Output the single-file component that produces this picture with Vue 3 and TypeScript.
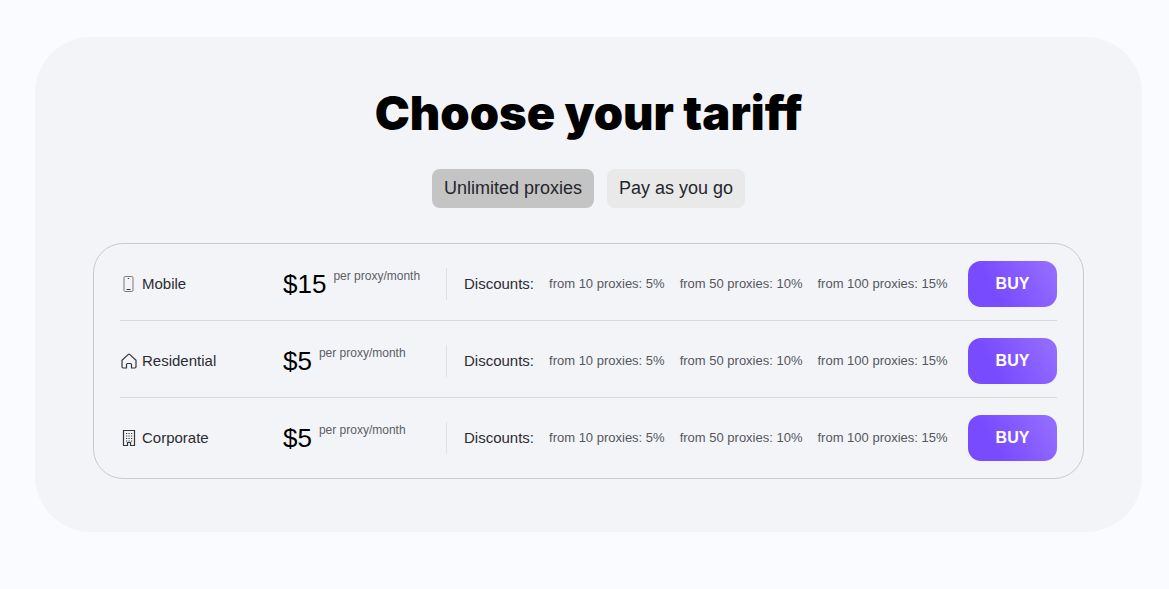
<script setup lang="ts">
import { ref } from 'vue'

type Kind = 'mobile' | 'residential' | 'corporate'
interface Plan { kind: Kind; name: string; price: string }

const modes: string[] = ['Unlimited proxies', 'Pay as you go']
const active = ref<string>(modes[0])
const plans: Plan[] = [
  { kind: 'mobile', name: 'Mobile', price: '$15' },
  { kind: 'residential', name: 'Residential', price: '$5' },
  { kind: 'corporate', name: 'Corporate', price: '$5' },
]
const discounts: string[] = ['from 10 proxies: 5%', 'from 50 proxies: 10%', 'from 100 proxies: 15%']
</script>

<template>
  <main class="page">
    <section class="panel">
      <h1 class="title">Choose your tariff</h1>
      <div class="modes">
        <button
          v-for="mode in modes"
          :key="mode"
          type="button"
          class="mode"
          :class="{ active: mode === active }"
          :aria-pressed="mode === active"
          @click="active = mode"
        >{{ mode }}</button>
      </div>
      <ul class="plans">
        <li v-for="plan in plans" :key="plan.name" class="plan">
          <h2 class="name">
            <svg v-if="plan.kind === 'mobile'" class="icon" viewBox="0 0 16 16" aria-hidden="true">
              <rect x="3" y="0.5" width="9" height="15" rx="1.2" fill="none" stroke="#77797f" />
              <path d="M6.8 2.500h1.400M5.500 13.500h4" fill="none" stroke="#3c3e44" />
            </svg>
            <svg v-else-if="plan.kind === 'residential'" class="icon" viewBox="0 0 16 16" aria-hidden="true">
              <path
                d="M1 7.2 7.4 1.400q.6-.5 1.200 0L15 7.200v6.600q0 1.200-1.200 1.200h-3.300v-3.500q0-1-1-1h-3q-1 0-1 1V15H2.200Q1 15 1 13.800Z"
                fill="none"
                stroke="#34363c"
                stroke-width="1.2"
                stroke-linejoin="round"
              />
            </svg>
            <svg v-else class="icon" viewBox="0 0 16 16" aria-hidden="true">
              <path d="M2.500.5h11v15h-4v-3h-3v3h-4Z" fill="none" stroke="#34363c" stroke-width="1.2" />
              <path d="M5 3.500h6.500M5 6h6.500M5 8.500h6.500M5 11h6.500" fill="none" stroke="#34363c" stroke-width="1.200" stroke-dasharray="1.200 1.300" />
            </svg>
            <span>{{ plan.name }}</span>
          </h2>
          <p class="price">
            <span class="amount">{{ plan.price }}</span>
            <span class="unit">per proxy/month</span>
          </p>
          <div class="discounts">
            <span class="label">Discounts:</span>
            <span v-for="discount in discounts" :key="discount" class="discount">{{ discount }}</span>
          </div>
          <button type="button" class="buy">BUY</button>
        </li>
      </ul>
    </section>
  </main>
</template>

<style>
body {
  background: #fafbfe;
}
</style>

<style scoped>
.page {
  padding: 37px 27px 57px 35px;
  font-family: "Liberation Sans", Arial, sans-serif;
  color: #2b2d33;
}
.panel {
  padding: 48px 58px 53px;
  border-radius: 56px;
  background: #f3f4f8;
}
.title {
  margin: 0;
  font-family: Inter, "Liberation Sans", sans-serif;
  font-size: 47px;
  font-weight: 900;
  line-height: 56px;
  text-align: center;
  color: #000;
}
.modes {
  display: flex;
  justify-content: center;
  gap: 13px;
  margin: 28px 0 35px;
}
.mode {
  height: 39px;
  padding: 0 12px 2px;
  border: 0;
  border-radius: 8px;
  background: #e9e9ea;
  color: #24262c;
  font: 18px/20px "Liberation Sans", Arial, sans-serif;
  cursor: pointer;
}
.mode.active {
  background: #c4c4c4;
}
.plans {
  margin: 0;
  padding: 0 26px 4px;
  border: 1px solid #c9cacf;
  border-radius: 30px;
  list-style: none;
}
.plan {
  display: grid;
  box-sizing: border-box;
  grid-template-columns: 163px 163px 1fr 89px;
  align-items: center;
  height: 77px;
  padding-top: 4px;
  border-bottom: 1px solid #d9dade;
}
.plan:last-child {
  height: 76px;
  border-bottom: 0;
}
.name {
  display: flex;
  align-items: center;
  gap: 5px;
  margin: 0;
  font-size: 15px;
  font-weight: 400;
  line-height: 20px;
}
.icon {
  width: 16px;
  height: 16px;
  margin-left: 1px;
}
.price {
  display: flex;
  align-items: flex-start;
  gap: 7px;
  margin: 0;
}
.amount {
  font-size: 26px;
  line-height: 30px;
  color: #000;
}
.unit {
  font-size: 12px;
  line-height: 14px;
  color: #5c5e64;
}
.discounts {
  display: flex;
  align-items: center;
  gap: 15px;
  height: 32px;
  padding-left: 17px;
  border-left: 1px solid #e0e1e6;
  line-height: 20px;
  white-space: nowrap;
}
.label {
  font-size: 15px;
}
.discount {
  font-size: 13px;
  color: #55575d;
}
.buy {
  height: 46px;
  padding: 0;
  border: 0;
  border-radius: 13px;
  background: linear-gradient(60deg, #784bff 30%, #936bff 90%);
  color: #fff;
  font: 700 16px/20px "Liberation Sans", Arial, sans-serif;
  cursor: pointer;
}
</style>
